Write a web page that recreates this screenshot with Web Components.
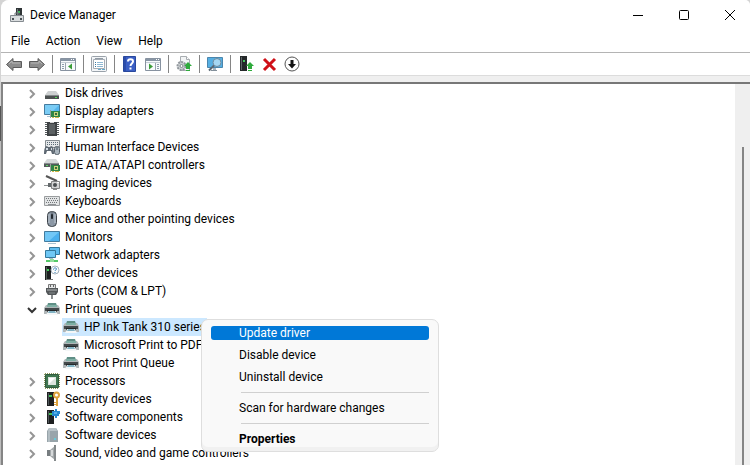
<!DOCTYPE html>
<html lang="en">
<head>
<meta charset="utf-8">
<title>Device Manager</title>
<style>
html, body {
  height: 100%;
  margin: 0;
}
body {
  overflow: hidden;
  background: linear-gradient(#d4d4d4 106px, #555 106px, #555 141px, #bdbdbd 141px);
  font: 12px/18px Roboto, "Open Sans", sans-serif;
  color: #000;
}
</style>
</head>
<body>
<device-manager></device-manager>

<script>
const chip = `<path d="M3 1h7v14H3z" fill="#1d1f20"/><path d="M4 2h1v12H4z" fill="#50575a"/><path d="M5 4h3v2H5z" fill="#3fc258"/>`;
const upArrow = `<path d="M12 6l4 4h-2v3h-4v-3H8z" fill="#2faa3c"/><path d="M10 14h4v1h-4z" fill="#2faa3c"/>`;
const consolePane = `<path d="M.5 2.500h15v12H.5z" fill="#f7fafc" stroke="#8792a0"/><path d="M1 3h14v2H1z" fill="#8795a5"/><path d="M1 6h14v1H1z" fill="#c4ccd5"/><path d="M11 3h1v1h-1zM13 3h1v1h-1z" fill="#fff"/>`;
const card = `<path d="M7 8h9v6H7z" fill="#2f8546"/><path d="M6 7h1v8H6z" fill="#9aa29b"/><path d="M8 14h2v1H8zM11 14h4v1h-4z" fill="#d4b54a"/><path d="M10 9h4v4h-4z" fill="#c9d37c"/><path d="M11 10h2v2h-2z" fill="#3d6b3a"/>`;

const icons = {
  app: `<path d="M7 1h6v9H7z" fill="#2f3436"/><path d="M8 2h1v7H8z" fill="#6e7778"/><path d="M9 4h2v2H9z" fill="#41b85a"/><path d="M1.500 8.500h13v6h-13z" fill="#d9dcde" stroke="#858b90"/><path d="M3 11h2v2H3zM11 11h2v2h-2z" fill="#4a5156"/><path d="M6 8V6h4v2" fill="none" stroke="#757b80"/>`,
  back: `<path d="M.5 8.500L7 2.500v3h8.500v6H7v3z" fill="#8c8c8c" stroke="#5c5c5c"/><path d="M3 8l3-3v2h8" fill="none" stroke="#b5b5b5"/>`,
  forward: `<path d="M15.500 8.500L9 2.500v3H.5v6H9v3z" fill="#8c8c8c" stroke="#5c5c5c"/><path d="M2 7h8V5l3 3" fill="none" stroke="#b5b5b5"/>`,
  tree: consolePane + `<path d="M5.500 7v7" stroke="#9aa5b1"/><path d="M2 8h2v1H2zM2 10h2v1H2zM2 12h2v1H2z" fill="#8d9cad"/><path d="M12 7.500v6L8 10.500z" fill="#3a9c38"/>`,
  properties: `<rect x=".5" y=".5" width="15" height="15" rx="1" fill="#f3f5f7" stroke="#9aa2aa"/><path d="M2.500 3.500h11v9h-11z" fill="#fff" stroke="#a5acb4"/><path d="M4 2h8v1H4z" fill="#929ba5"/><path d="M4 6h1v1H4zM4 8h1v1H4zM4 10h1v1H4z" fill="#38779f"/><path d="M6 6h6v1H6zM6 8h6v1H6zM6 10h6v1H6z" fill="#8eb8d4"/><path d="M7 13h3v1H7zM11 13h3v1h-3z" fill="#61a9cb"/>`,
  help: `<path d="M1.500.5h12v15h-12z" fill="#3b5fc4" stroke="#29489d"/><path d="M2 1h2v14H2z" fill="#2c4dab"/><path d="M6 5.500C6 2.500 11 2.500 11 5.500c0 2-2.500 2-2.500 4.500" fill="none" stroke="#fff" stroke-width="2"/><path d="M7.500 11.500h2v2h-2z" fill="#fff"/>`,
  action: consolePane + `<path d="M10.500 7v7" stroke="#9aa5b1"/><path d="M12 8h2v1h-2zM12 10h2v1h-2zM12 12h2v1h-2z" fill="#8d9cad"/><path d="M4 7.500v6l4-3z" fill="#3a9c38"/>`,
  scan: `<path d="M4.500.5h6l3 3v11h-9z" fill="#f2f4f5" stroke="#a8adb1"/><path d="M10.500.5v3h3" fill="#fff" stroke="#a8adb1"/><circle cx="5.500" cy="10" r="4" fill="#ccd0d3" stroke="#91979c" stroke-width="2" stroke-dasharray="2 1"/><circle cx="5.500" cy="10" r="1.500" fill="#fff" stroke="#7e858a"/>` + upArrow,
  computer: `<path d="M.5 1.500h15v10H.5z" fill="#55afe3" stroke="#4b86ad"/><path d="M4 14h6v1H4z" fill="#83909b"/><path d="M6 12h3v2H6z" fill="#a6b5bf"/><circle cx="10" cy="6.500" r="4" fill="#a4d7f3" stroke="#718a9b"/><path d="M7 9.500l-5 5" stroke="#596874" stroke-width="2"/>`,
  update: `<path d="M2 0h7v15H2z" fill="#24282a"/><path d="M3 1h1v13H3z" fill="#5d6567"/><path d="M5 4h2v2H5z" fill="#43c45c"/>` + upArrow,
  remove: `<path d="M3 3l11 11M14 3L3 14" stroke="#cf1018" stroke-width="3"/>`,
  disable: `<circle cx="8" cy="8" r="7" fill="#fdfdfd" stroke="#555"/><path d="M6.500 4h3v4h2.500l-4 4.500L4 8h2.500z" fill="#111"/>`,

  disk: `<path d="M4 6h8l3 4H1z" fill="#cdd0d1"/><path d="M1 10h14v4H1z" fill="#4c5051"/><path d="M1 10h14v1H1z" fill="#858a8b"/><path d="M11 12h2v1h-2z" fill="#54d95b"/>`,
  display: `<path d="M.5 1.500h15v10H.5z" fill="#56b7ee" stroke="#457b9e"/><path d="M1 2h14l-9 9H1z" fill="#7accf5"/><path d="M3 13h4v1H3z" fill="#a8c3d3"/>` + card,
  firmware: `<path d="M3 1h10v14H3z" fill="#3e4244"/><path d="M2 1v14M14 1v14" stroke="#555b5d" stroke-width="2" stroke-dasharray="1 1"/><path d="M5 3h6v10H5z" fill="#5c6163"/><path d="M6 1h4v1H6z" fill="#d4d4d4"/>`,
  hid: `<path d="M1.500 1.500h14v7h-14z" fill="#e4e7e9" stroke="#858c91"/><path d="M3 3.500h12M3 5.500h12" stroke="#5a6a75" stroke-dasharray="1 1"/><path d="M0 15c0-5 1-8 3-8l1 1h2l1-1c2 0 3 3 3 8H8l-1-3H3l-1 3z" fill="#5f6973"/><path d="M2 9h2v2H2zM7 9h1v2H7z" fill="#d3dce3"/><rect x="10.500" y="7.500" width="5" height="8" rx="2" fill="#a9b4bd" stroke="#56606a"/><path d="M13 8v3" stroke="#42505b"/>`,
  ide: `<path d="M3 2h9l3 4H0z" fill="#d5d8d9"/><path d="M0 6h15v4H0z" fill="#54595b"/><path d="M0 6h15v1H0z" fill="#888d8f"/><path d="M2 8h2v1H2z" fill="#60d46a"/>` + card,
  imaging: `<path d="M2 1l11 5" stroke="#555" stroke-width="2"/><path d="M7.500 6.500h8v7h-8z" fill="#d4d4d4" stroke="#858585"/><circle cx="11" cy="10" r="2" fill="#4b4e50"/><path d="M13 7h2v1h-2z" fill="#fff"/><path d="M0 10.500h5" stroke="#909495"/><path d="M4 8h3v4H4z" fill="#656a6c"/><path d="M9 14h4v1H9z" fill="#888"/>`,
  keyboard: `<path d="M.5 3.500h15v9H.5z" fill="#e2e4e5" stroke="#9a9d9f"/><path d="M2 5.500h12M2 9.500h12" stroke="#73777a" stroke-dasharray="1 1"/><path d="M3 7.500h11" stroke="#73777a" stroke-dasharray="1 1"/><path d="M4 11h8v1H4z" fill="#8d9194"/>`,
  mouse: `<rect x="3.500" y=".5" width="9" height="15" rx="4" fill="#8c98a5" stroke="#3c4249"/><path d="M5 3v9M11 3v9" stroke="#bdc6cf"/><path d="M8 1v7" stroke="#515962"/><rect x="7" y="3" width="2" height="5" rx="1" fill="#242a30"/>`,
  monitor: `<path d="M.5 2.500h15v10H.5z" fill="#4ab0ee" stroke="#427b9e"/><path d="M1 3h14L5 12H1z" fill="#71c7f6"/><path d="M4 14h8v1H4z" fill="#a8c3d3"/>`,
  network: `<path d="M5.500.5h10v7h-10z" fill="#5cbcf0" stroke="#34789c"/><path d="M1.500 3.500h10v7h-10z" fill="#6ec7f5" stroke="#34789c"/><path d="M5 11h4v1H5z" fill="#a5bfc9"/><path d="M6 12h4v1h4v2H2v-2h4z" fill="#54c867"/><path d="M6 12h4v3H6z" fill="#93dd9c"/>`,
  other: `<path d="M1 1h6v14H1z" fill="#1d2021"/><path d="M2 2h1v12H2z" fill="#506057"/><path d="M3 4h2v2H3z" fill="#40ce57"/><path d="M2 14h7v1H2z" fill="#777"/><circle cx="11" cy="5" r="4" fill="#fafcfd" stroke="#a5b3bd"/><path d="M9.500 4.500c0-2 3-2 3-.5 0 1-1.500 1-1.500 2" fill="none" stroke="#2f7eb8"/><path d="M10.500 7h1v1h-1z" fill="#2f7eb8"/>`,
  ports: `<path d="M4.500 5V1.500h7V5" fill="#e2e4e5" stroke="#777"/><path d="M6 2h1v2H6zM9 2h1v2H9z" fill="#666"/><path d="M2 5h12v4l-2 3H4L2 9z" fill="#54585a"/><path d="M3 6h10v2H3z" fill="#85898b"/><path d="M5 9h6v2H5z" fill="#6b7072"/><path d="M7 12h2v4H7z" fill="#898d8f"/>`,
  printer: `<path d="M4 2h8l1 3H3z" fill="#5f8f86"/><path d="M2 4h12l2 3v6H0V7z" fill="#b0b6b8"/><path d="M3 4h10v2H3z" fill="#7fb0a5"/><path d="M1 7h14v3H1z" fill="#43494b"/><path d="M3 9h10v4H3z" fill="#24282a"/><path d="M4 10h8l2 4H2z" fill="#f4f7f8"/><path d="M5 10h6l1 2H4z" fill="#82b3c4"/>`,
  processor: `<path d="M1.500 1.500h13v13h-13z" fill="#3f7650" stroke="#315c3e"/><path d="M1 .5h14M1 15.500h14M.5 1v14M15.500 1v14" stroke="#8a9659" stroke-dasharray="1 1"/><path d="M4 4h8v8H4z" fill="#dde5de"/><path d="M5 5h6L5 11z" fill="#fff"/>`,
  security: chip + `<circle cx="12.500" cy="4" r="2.500" fill="#fff" stroke="#dda23d" stroke-width="2"/><path d="M12 7h2v8h-2zM10 11h2v1h-2zM10 13h2v1h-2z" fill="#dda23d"/>`,
  component: chip + `<path d="M8 2h3V0h2v2h3v3h-1v2h-2v2h-2V7H8z" fill="#2688cf"/><path d="M10 3h3v2h-3z" fill="#57afe8"/>`,
  software: `<path d="M5 1h7l2 3v11H3V4z" fill="#98a4aa"/><path d="M5 1h7l1 3H4z" fill="#b8c2c7"/><path d="M4 4h2v11H4z" fill="#b2bdc2"/><path d="M10 11h2v2h-2z" fill="#69c8d6"/>`,
  sound: `<path d="M3 5h4v6H3z" fill="#777d80"/><path d="M6 5l5-4v14l-5-4z" fill="#a4a9ab"/><path d="M10 0h2v16h-2z" fill="#84898b"/><path d="M7 5h2v6H7z" fill="#d6d9da"/>`,
  storage: `<path d="M5 2l4 4H1z" fill="#444"/><path d="M3 5h11v8H3z" fill="#8d9294"/>`,

  minimize: `<path d="M3 8.500h10" stroke="#000"/>`,
  maximize: `<rect x="3.500" y="3.500" width="9" height="9" rx="1" fill="none" stroke="#000"/>`,
  close: `<path d="M3 3l10 10M13 3L3 13" stroke="#000"/>`,
  closed: `<path d="M6 5l4 4-4 4" fill="none" stroke="#959595" stroke-width="2"/>`,
  open: `<path d="M4 7l4 4 4-4" fill="none" stroke="#333" stroke-width="2"/>`
};

class DmIcon extends HTMLElement {
  constructor() {
    super();
    this.attachShadow({mode: "open"});
  }

  connectedCallback() {
    this.shadowRoot.innerHTML = `
<style>
:host {
  display: block;
  flex: none;
  width: 16px;
  height: 16px;
}
svg {
  display: block;
}
</style>
<svg width="16" height="16" viewBox="0 0 16 16" aria-hidden="true">${icons[this.getAttribute("name")]}</svg>`;
  }
}

class TitleBar extends HTMLElement {
  constructor() {
    super();
    this.attachShadow({mode: "open"}).innerHTML = `
<style>
:host {
  display: flex;
  align-items: center;
  height: 29px;
  padding: 0 12px 0 8px;
  background: #fff;
}
h1 {
  flex: 1;
  margin: 0 0 0 5px;
  font: inherit;
}
.controls {
  display: flex;
  gap: 30px;
}
button {
  padding: 0;
  border: 0;
  background: none;
}
</style>
<dm-icon name="app"></dm-icon>
<h1><slot></slot></h1>
<div class="controls">
  <button aria-label="Minimize"><dm-icon name="minimize"></dm-icon></button>
  <button aria-label="Maximize"><dm-icon name="maximize"></dm-icon></button>
  <button aria-label="Close"><dm-icon name="close"></dm-icon></button>
</div>`;
  }
}

class MenuBar extends HTMLElement {
  constructor() {
    super();
    this.attachShadow({mode: "open"}).innerHTML = `
<style>
:host {
  display: flex;
  gap: 16px;
  height: 23px;
  padding-left: 10px;
  background: #fff;
  border-bottom: 1px solid #b4b4b4;
}
::slotted(button) {
  padding: 0;
  border: 0;
  background: none;
  font: inherit;
  color: inherit;
}
</style>
<slot></slot>`;
  }
}

class ToolBar extends HTMLElement {
  constructor() {
    super();
    const groups = [
      [["back", "Back"], ["forward", "Forward"]],
      [["tree", "Show/Hide Console Tree"]],
      [["properties", "Properties"]],
      [["help", "Help"], ["action", "Show/Hide Action Pane"]],
      [["scan", "Scan for hardware changes"]],
      [["computer", "Add legacy hardware"]],
      [["update", "Update driver"], ["remove", "Uninstall device"], ["disable", "Disable device"]]
    ];
    this.attachShadow({mode: "open"}).innerHTML = `
<style>
:host {
  display: flex;
  align-items: center;
  gap: 7px;
  height: 22px;
  padding-left: 5px;
  background: #fff;
  border-bottom: 1px solid #dcdcdc;
}
button {
  padding: 0;
  border: 0;
  background: none;
}
.line {
  width: 1px;
  height: 18px;
  background: #858585;
}
</style>
${groups.map(group => group.map(([icon, label]) =>
    `<button aria-label="${label}"><dm-icon name="${icon}"></dm-icon></button>`).join("")
  ).join(`<span class="line"></span>`)}`;
  }
}

class TreeRow extends HTMLElement {
  constructor() {
    super();
    this.attachShadow({mode: "open"});
  }

  connectedCallback() {
    const state = this.hasAttribute("open") ? "open" : "closed";
    const toggle = this.hasAttribute("child") ? "" :
      `<button aria-label="Toggle" aria-expanded="${state === "open"}"><dm-icon name="${state}"></dm-icon></button>`;

    this.setAttribute("role", "treeitem");
    this.shadowRoot.innerHTML = `
<style>
:host {
  display: flex;
  align-items: center;
  height: 18px;
  padding-left: 21px;
  white-space: nowrap;
}
:host([child]) {
  padding-left: 59px;
}
button {
  margin-right: 3px;
  padding: 0;
  border: 0;
  background: none;
}
.item {
  display: flex;
  align-items: center;
  gap: 5px;
  padding: 0 1px;
}
:host([selected]) .item {
  background: #cce8ff;
}
</style>
${toggle}
<div class="item"><dm-icon name="${this.getAttribute("icon")}"></dm-icon><slot></slot></div>`;
  }
}

class ContextMenu extends HTMLElement {
  constructor() {
    super();
    this.attachShadow({mode: "open"}).innerHTML = `
<style>
:host {
  display: flex;
  flex-direction: column;
  gap: 8px;
  box-sizing: border-box;
  width: 238px;
  padding: 6px 9px 5px;
  background: #f9f9f9;
  border: 1px solid #dedede;
  border-radius: 7px;
  box-shadow: inset 0 -4px #f1f1f1;
}
::slotted(button) {
  height: 14px;
  padding: 0 28px;
  border: 0;
  border-radius: 3px;
  background: none;
  font: inherit;
  line-height: 14px;
  color: inherit;
  text-align: left;
}
::slotted(button.active) {
  background: #0078d7;
  color: #fff;
}
::slotted(button.default) {
  font-weight: bold;
}
::slotted(hr) {
  width: 188px;
  height: 1px;
  margin: 0 0 0 auto;
  border: 0;
  background: #d0d0d0;
}
</style>
<slot></slot>`;
    this.setAttribute("role", "menu");
  }
}

class DeviceManager extends HTMLElement {
  constructor() {
    super();
    this.attachShadow({mode: "open"}).innerHTML = `
<style>
:host {
  display: flex;
  flex-direction: column;
  box-sizing: border-box;
  height: 100vh;
  border-left: 1px solid transparent;
}
.window {
  display: flex;
  flex: 1;
  flex-direction: column;
  min-height: 0;
  overflow: hidden;
  background: #efefef;
  border-radius: 8px 5px 0 0;
}
.view {
  position: relative;
  display: flex;
  flex: 1;
  min-height: 0;
  margin-top: 6px;
  border-top: 2px solid #777;
  border-left: 2px solid #858585;
}
.tree {
  flex: 1;
  overflow: hidden;
  background: #fff;
}
.scroll {
  width: 15px;
  background: #efefef;
}
.thumb {
  width: 2px;
  height: 100%;
  margin: 63px auto 0;
  background: #858585;
}
context-menu {
  position: absolute;
  top: 235px;
  left: 198px;
}
</style>
<div class="window">
  <title-bar>Device Manager</title-bar>
  <menu-bar>
    <button>File</button>
    <button>Action</button>
    <button>View</button>
    <button>Help</button>
  </menu-bar>
  <tool-bar></tool-bar>
  <div class="view">
    <div class="tree" role="tree">
      <tree-row icon="disk">Disk drives</tree-row>
      <tree-row icon="display">Display adapters</tree-row>
      <tree-row icon="firmware">Firmware</tree-row>
      <tree-row icon="hid">Human Interface Devices</tree-row>
      <tree-row icon="ide">IDE ATA/ATAPI controllers</tree-row>
      <tree-row icon="imaging">Imaging devices</tree-row>
      <tree-row icon="keyboard">Keyboards</tree-row>
      <tree-row icon="mouse">Mice and other pointing devices</tree-row>
      <tree-row icon="monitor">Monitors</tree-row>
      <tree-row icon="network">Network adapters</tree-row>
      <tree-row icon="other">Other devices</tree-row>
      <tree-row icon="ports">Ports (COM &amp; LPT)</tree-row>
      <tree-row icon="printer" open>Print queues</tree-row>
      <tree-row icon="printer" child selected>HP Ink Tank 310 series</tree-row>
      <tree-row icon="printer" child>Microsoft Print to PDF</tree-row>
      <tree-row icon="printer" child>Root Print Queue</tree-row>
      <tree-row icon="processor">Processors</tree-row>
      <tree-row icon="security">Security devices</tree-row>
      <tree-row icon="component">Software components</tree-row>
      <tree-row icon="software">Software devices</tree-row>
      <tree-row icon="sound">Sound, video and game controllers</tree-row>
      <tree-row icon="storage"></tree-row>
    </div>
    <div class="scroll"><div class="thumb"></div></div>
    <context-menu>
      <button role="menuitem" class="active">Update driver</button>
      <button role="menuitem">Disable device</button>
      <button role="menuitem">Uninstall device</button>
      <hr>
      <button role="menuitem">Scan for hardware changes</button>
      <hr>
      <button role="menuitem" class="default">Properties</button>
    </context-menu>
  </div>
</div>`;
  }
}

customElements.define("dm-icon", DmIcon);
customElements.define("title-bar", TitleBar);
customElements.define("menu-bar", MenuBar);
customElements.define("tool-bar", ToolBar);
customElements.define("tree-row", TreeRow);
customElements.define("context-menu", ContextMenu);
customElements.define("device-manager", DeviceManager);
</script>
</body>
</html>
